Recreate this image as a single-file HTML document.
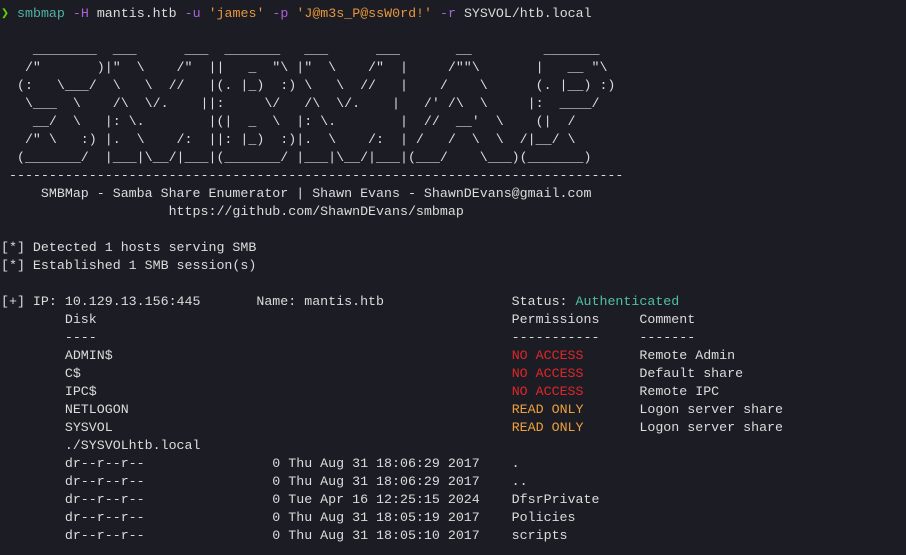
<!DOCTYPE html>
<html><head><meta charset="utf-8"><style>
html,body{margin:0;padding:0;background:#1c1d24;width:906px;height:555px;overflow:hidden}
pre{margin:0;padding:5px 0 0 1px;font-family:"Liberation Mono","DejaVu Sans Mono",monospace;font-size:13.3px;line-height:18px;color:#dcdcdc;white-space:pre}
.g{color:#5fd700}.t{color:#4fb3a0}.p{color:#a862d8}.o{color:#e6963a}.r{color:#e0262a}.y{color:#eea03c}.a{color:#4fc0a0}
</style></head><body><pre><span class="g">❯</span> <span class="t">smbmap</span> <span class="p">-H</span> mantis.htb <span class="p">-u</span> <span class="o">'james'</span> <span class="p">-p</span> <span class="o">'J@m3s_P@ssW0rd!'</span> <span class="p">-r</span> SYSVOL/htb.local

    ________  ___      ___  _______   ___      ___       __         _______
   /"       )|"  \    /"  ||   _  "\ |"  \    /"  |     /""\       |   __ "\
  (:   \___/  \   \  //   |(. |_)  :) \   \  //   |    /    \      (. |__) :)
   \___  \    /\  \/.    ||:     \/   /\  \/.    |   /' /\  \     |:  ____/
    __/  \   |: \.        |(|  _  \  |: \.        |  //  __'  \    (|  /
   /" \   :) |.  \    /:  ||: |_)  :)|.  \    /:  | /   /  \  \  /|__/ \
  (_______/  |___|\__/|___|(_______/ |___|\__/|___|(___/    \___)(_______)
 -----------------------------------------------------------------------------
     SMBMap - Samba Share Enumerator | Shawn Evans - ShawnDEvans@gmail.com
                     https://github.com/ShawnDEvans/smbmap

[*] Detected 1 hosts serving SMB
[*] Established 1 SMB session(s)

[+] IP: 10.129.13.156:445       Name: mantis.htb                Status: <span class="a">Authenticated</span>
        Disk                                                    Permissions     Comment
        ----                                                    -----------     -------
        ADMIN$                                                  <span class="r">NO ACCESS</span>       Remote Admin
        C$                                                      <span class="r">NO ACCESS</span>       Default share
        IPC$                                                    <span class="r">NO ACCESS</span>       Remote IPC
        NETLOGON                                                <span class="y">READ ONLY</span>       Logon server share
        SYSVOL                                                  <span class="y">READ ONLY</span>       Logon server share
        ./SYSVOLhtb.local
        dr--r--r--                0 Thu Aug 31 18:06:29 2017    .
        dr--r--r--                0 Thu Aug 31 18:06:29 2017    ..
        dr--r--r--                0 Tue Apr 16 12:25:15 2024    DfsrPrivate
        dr--r--r--                0 Thu Aug 31 18:05:19 2017    Policies
        dr--r--r--                0 Thu Aug 31 18:05:10 2017    scripts
</pre></body></html>
